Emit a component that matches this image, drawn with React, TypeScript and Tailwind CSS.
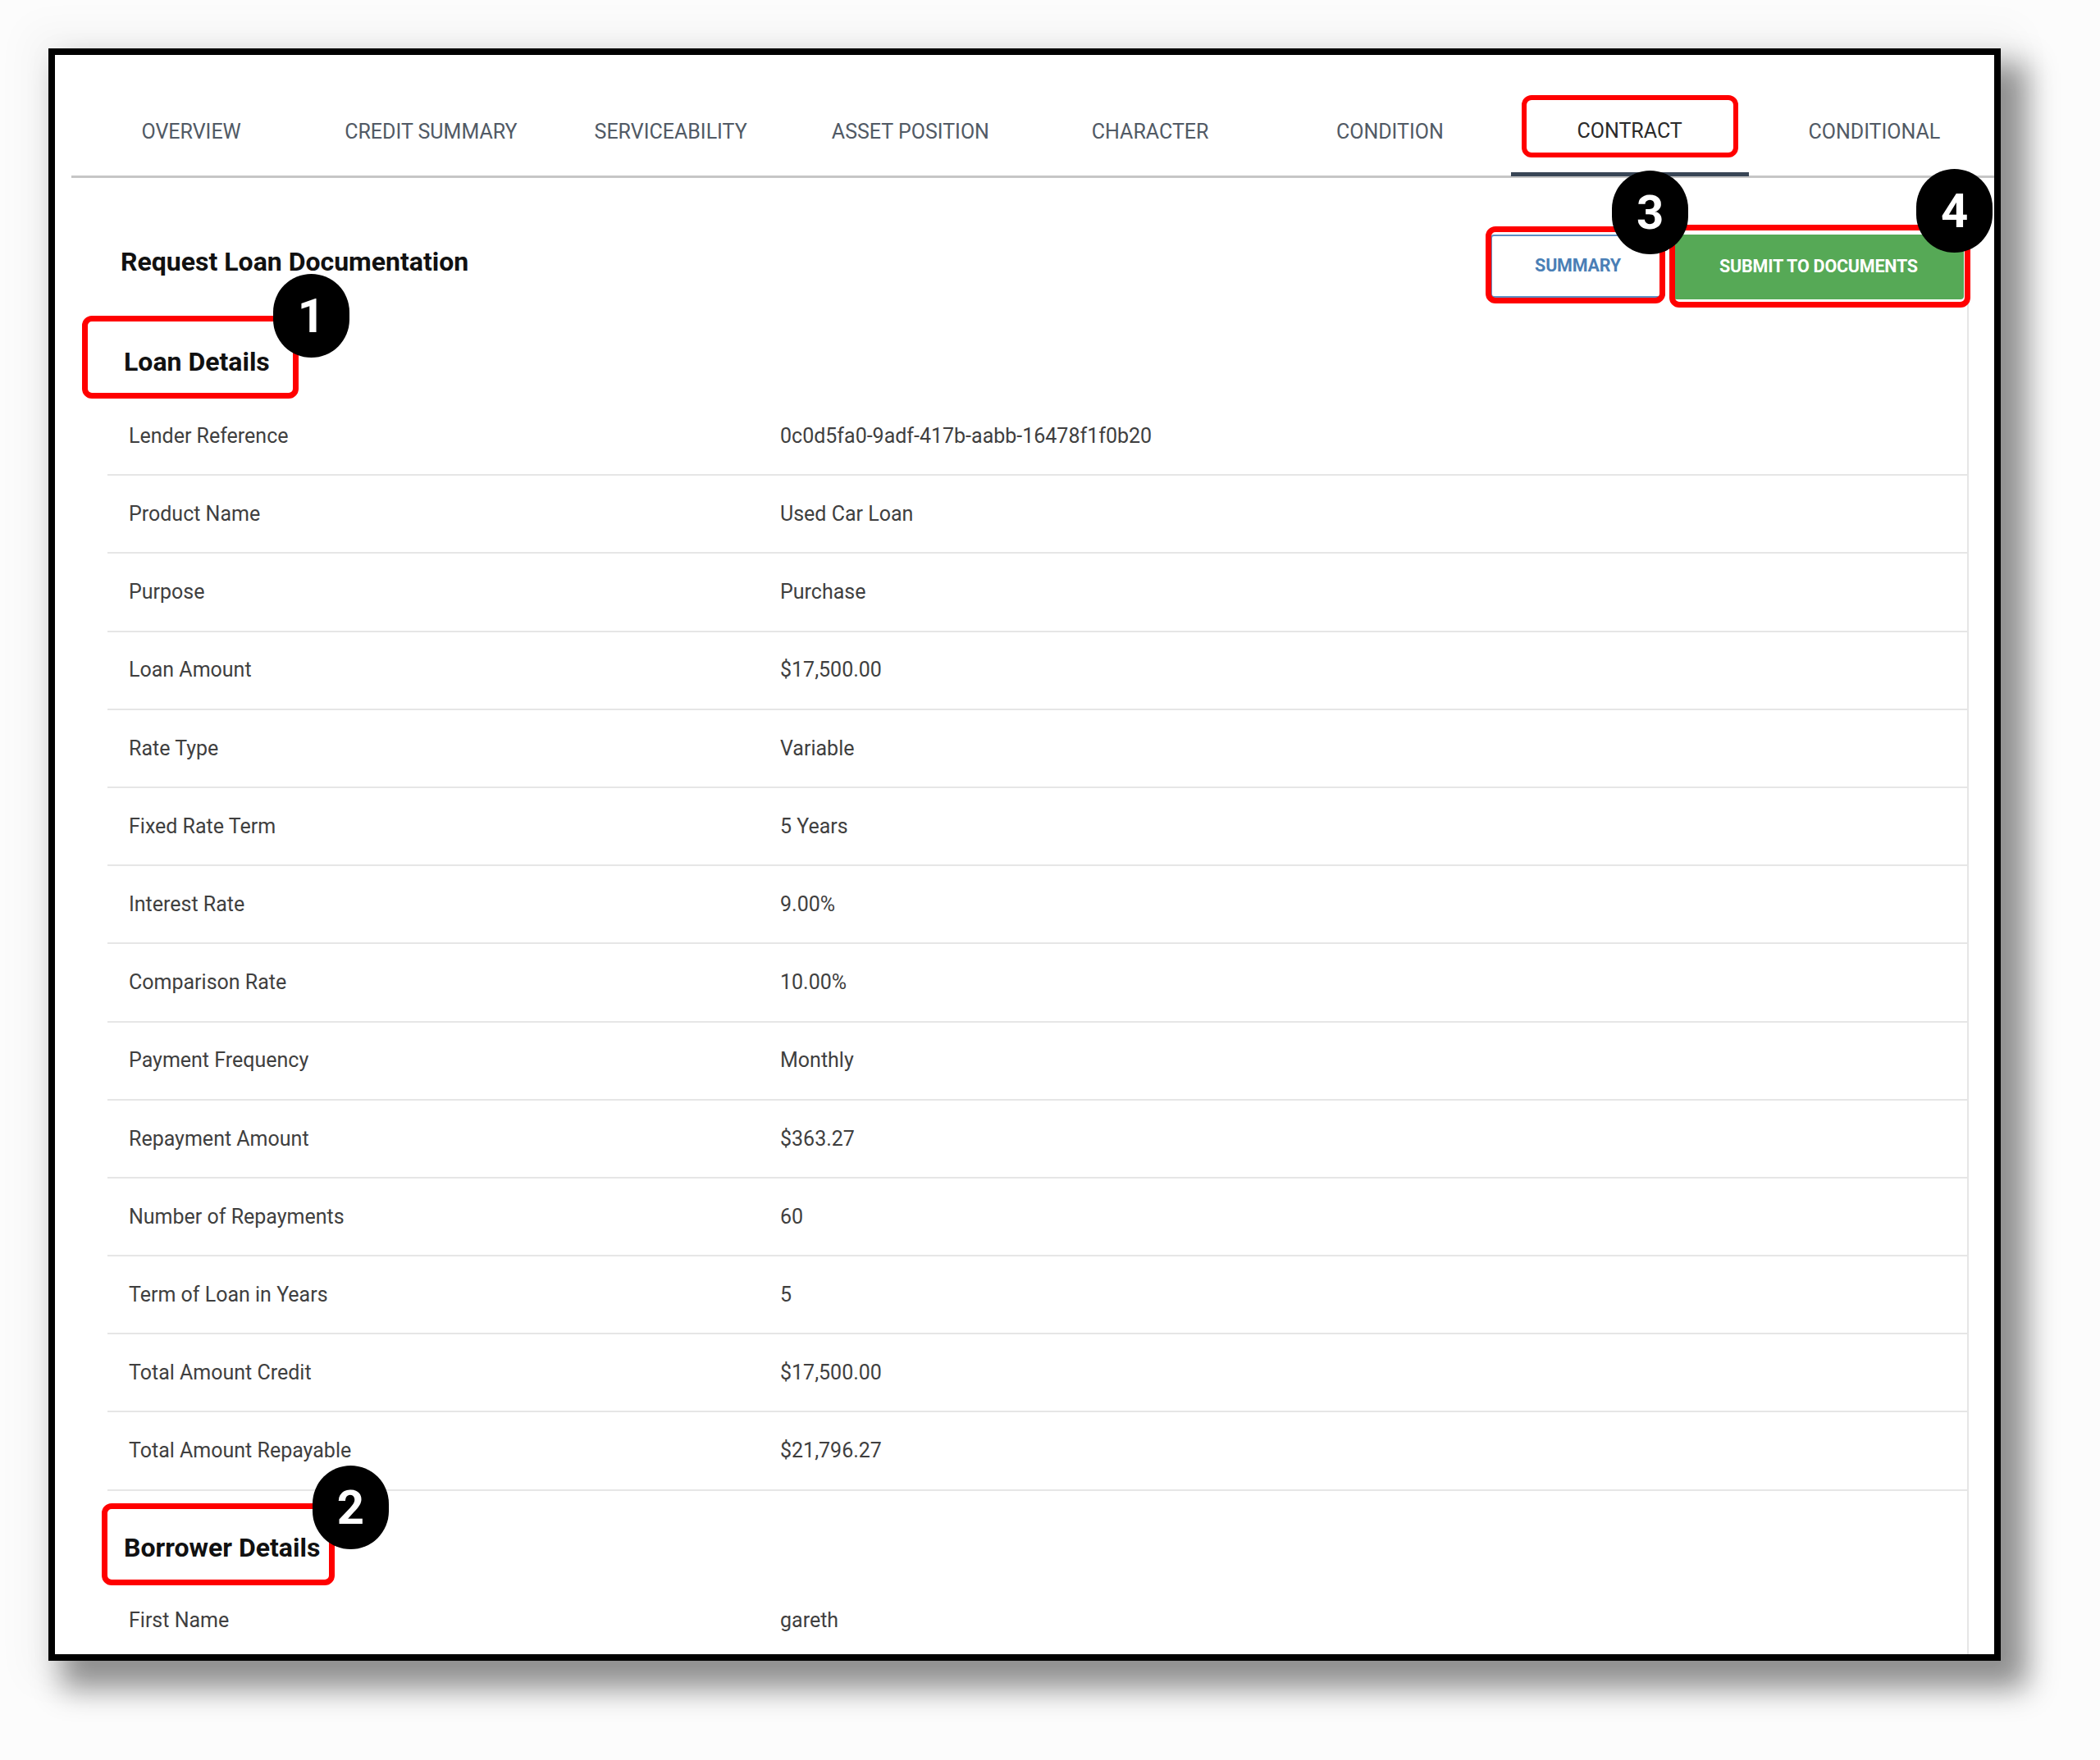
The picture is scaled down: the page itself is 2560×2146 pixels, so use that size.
import React from 'react';

const tabs = [
  'OVERVIEW',
  'CREDIT SUMMARY',
  'SERVICEABILITY',
  'ASSET POSITION',
  'CHARACTER',
  'CONDITION',
  'CONTRACT',
  'CONDITIONAL',
];

const loanRows: Array<[string, string]> = [
  ['Lender Reference', '0c0d5fa0-9adf-417b-aabb-16478f1f0b20'],
  ['Product Name', 'Used Car Loan'],
  ['Purpose', 'Purchase'],
  ['Loan Amount', '$17,500.00'],
  ['Rate Type', 'Variable'],
  ['Fixed Rate Term', '5 Years'],
  ['Interest Rate', '9.00%'],
  ['Comparison Rate', '10.00%'],
  ['Payment Frequency', 'Monthly'],
  ['Repayment Amount', '$363.27'],
  ['Number of Repayments', '60'],
  ['Term of Loan in Years', '5'],
  ['Total Amount Credit', '$17,500.00'],
  ['Total Amount Repayable', '$21,796.27'],
];

// numbered callout used by the annotations
const Badge: React.FC<{ n: number; className: string }> = ({ n, className }) => (
  <span
    className={`absolute z-10 flex h-[102px] w-[93px] items-center justify-center rounded-full bg-black text-[58px] font-bold leading-none text-white ${className}`}
  >
    {n}
  </span>
);

const Row: React.FC<{ label: string; value: string }> = ({ label, value }) => (
  <div className="flex h-[95.2px] items-center border-b-2 border-[#e6e6e6] pl-[26px] text-[25px] text-[#3f3f3f]">
    <div className="w-[794px]">{label}</div>
    <div>{value}</div>
  </div>
);

export default function App() {
  return (
    <div className="min-h-[2146px] bg-[#fcfcfc] pl-[59px] pt-[59px] font-['Roboto','Liberation_Sans',sans-serif]">
      <div className="h-[1966px] w-[2380px] overflow-hidden border-8 border-black bg-white shadow-[24px_26px_34px_8px_rgba(0,0,0,0.42),0_0_44px_26px_rgba(0,0,0,0.03)]">
        {/* Tabs */}
        <div className="ml-[20px] flex h-[150px] border-b-[3px] border-[#c6c6c6]">
          {tabs.map((t) =>
            t === 'CONTRACT' ? (
              <div key={t} className="relative flex flex-1 justify-center pr-[6px] pt-[27px]">
                <div className="mt-[22px] flex h-[76px] w-[264px] items-center justify-center rounded-[12px] border-[6px] border-[#ff0000] pt-[12px] text-[25px] text-[#2a2a2a]">
                  {t}
                </div>
                <span className="absolute bottom-[-1px] left-[1px] right-[7px] h-[5px] bg-[#394656]" />
              </div>
            ) : (
              <div key={t} className="flex flex-1 items-center justify-center pt-[40px] text-[25px] text-[#515a65]">
                {t}
              </div>
            )
          )}
        </div>

        {/* Content card */}
        <div className="ml-[64px] mr-[31px] border-r-2 border-[#e6e6e6] pb-[200px]">
          {/* Header */}
          <div className="mt-[69px] flex h-[79px] items-start justify-between">
            <h1 className="ml-[16px] mt-[14px] text-[32px] font-bold leading-[38px] text-[#111]">
              Request Loan Documentation
            </h1>
            <div className="mr-[4px] flex gap-[10px]">
              <div className="relative flex h-[77px] w-[213px] items-center justify-center rounded-[4px] border-2 border-[#5e8fc4] bg-white text-[21.5px] font-bold tracking-[-0.01em] text-[#4a7fb6]">
                SUMMARY
                <span className="absolute bottom-[-9px] left-[-8px] right-[-2px] top-[-12px] rounded-[12px] border-[7px] border-[#ff0000]" />
                <Badge n={3} className="left-[146px] top-[-80px]" />
              </div>
              <div className="relative flex h-[79px] w-[354px] items-center justify-center rounded-[4px] bg-[#56a956] text-[21.5px] font-bold tracking-[-0.01em] text-white">
                SUBMIT TO DOCUMENTS
                <span className="absolute bottom-[-10px] left-[-5px] right-[-8px] top-[-12px] rounded-[12px] border-[7px] border-[#ff0000]" />
                <Badge n={4} className="left-[296px] top-[-80px]" />
              </div>
            </div>
          </div>

          {/* Loan Details */}
          <div className="flex h-[120px] items-center pl-[20px] pt-[32px]">
            <span className="relative text-[32px] font-bold leading-[36px] text-[#111]">
              Loan Details
              <span className="absolute bottom-[-27px] left-[-51px] right-[-35px] top-[-38px] rounded-[12px] border-[7px] border-[#ff0000]" />
              <Badge n={1} className="left-[182px] top-[-89px]" />
            </span>
          </div>
          {loanRows.map(([label, value]) => (
            <Row key={label} label={label} value={value} />
          ))}

          {/* Borrower Details */}
          <div className="flex h-[112px] items-center pl-[20px] pt-[26px]">
            <span className="relative text-[32px] font-bold leading-[36px] text-[#111]">
              Borrower Details
              <span className="absolute bottom-[-28px] left-[-27px] right-[-18px] top-[-36px] rounded-[12px] border-[7px] border-[#ff0000]" />
              <Badge n={2} className="left-[230px] top-[-82px]" />
            </span>
          </div>
          <Row label="First Name" value="gareth" />
        </div>
      </div>
    </div>
  );
}
